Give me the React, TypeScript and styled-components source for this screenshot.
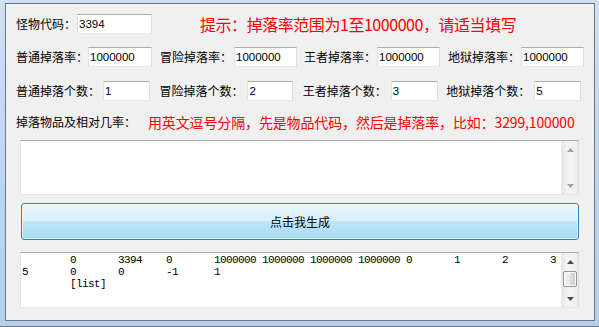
import React from "react";
import styled, { createGlobalStyle } from "styled-components";

const Global = createGlobalStyle`
  html, body { margin: 0; padding: 0; background: #ffffff; }
  body { font-family: "Noto Sans CJK SC", "Liberation Sans", sans-serif; }
  * { box-sizing: border-box; }
`;

const Frame = styled.div`
  width: 599px;
  height: 327px;
  padding: 3px 4px 5px 5px;
  background: linear-gradient(180deg, #cfe0f3 0%, #bcd4ee 60%, #b7d0ec 100%);
  border-bottom: 1px solid #6b7a8c;
`;

const Client = styled.div`
  width: 590px;
  height: 318px;
  background: #f0f0f0;
  border: 1px solid #6d7886;
  display: flex;
  flex-direction: column;
  font-size: 12px;
  color: #000;
`;

const Row = styled.div<{ $top: number }>`
  display: flex;
  align-items: center;
  height: 20px;
  margin-top: ${(p) => p.$top}px;
  padding-left: 10px;
`;

const FieldGrid = styled.div<{ $top: number; $col: number }>`
  display: grid;
  grid-template-columns: repeat(4, ${(p) => p.$col}px);
  align-items: center;
  height: 20px;
  margin-top: ${(p) => p.$top}px;
  padding-left: 10px;
`;

const Field = styled.div`
  display: flex;
  align-items: center;
`;

const Label = styled.span<{ $w: number }>`
  width: ${(p) => p.$w}px;
  flex: none;
  font-size: 12px;
  line-height: 14px;
  white-space: nowrap;
`;

const Input = styled.div<{ $w: number; $ml?: number }>`
  width: ${(p) => p.$w}px;
  height: 20px;
  margin-left: ${(p) => p.$ml ?? 0}px;
  flex: none;
  background: #fff;
  border: 1px solid;
  border-color: #abadb3 #dbdfe6 #e3e9ef #e2e3ea;
  font-family: "Liberation Sans", Arial, sans-serif;
  font-size: 11.5px;
  line-height: 18px;
  padding-left: 1px;
  white-space: nowrap;
`;

const Hint = styled.span`
  margin-left: 48px;
  color: #ff0000;
  font-size: 16px;
  letter-spacing: -0.45px;
  line-height: 20px;
  white-space: nowrap;
`;

const NoteRow = styled.div`
  display: flex;
  align-items: center;
  height: 14px;
  margin-top: 14px;
  padding-left: 10px;
`;

const Note = styled.span`
  margin-left: 12px;
  color: #ff0000;
  font-size: 14px;
  letter-spacing: -0.14px;
  line-height: 14px;
  white-space: nowrap;
`;

const BoxArea = styled.div<{ $top: number }>`
  margin-top: ${(p) => p.$top}px;
  padding: 0 15px 0 14px;
`;

const TextBox = styled.div<{ $h: number }>`
  height: ${(p) => p.$h}px;
  background: #fff;
  border: 1px solid;
  border-color: #abadb3 #dbdfe6 #e3e9ef #e2e3ea;
  display: flex;
`;

const TextContent = styled.pre`
  flex: 1;
  margin: 0;
  padding: 1px 0 0 1px;
  font-family: "Liberation Mono", "Courier New", monospace;
  font-size: 11px;
  letter-spacing: -0.6px;
  line-height: 12px;
  color: #000;
  overflow: hidden;
`;

const ScrollBar = styled.div`
  width: 17px;
  flex: none;
  display: flex;
  flex-direction: column;
  background: linear-gradient(90deg, #e6e6e6 0%, #f2f2f2 30%, #f2f2f2 70%, #e9e9e9 100%);
  border-left: 1px solid #ececec;
`;

const ArrowBtn = styled.div`
  height: 17px;
  flex: none;
  display: flex;
  align-items: center;
  justify-content: center;
`;

const Track = styled.div`
  flex: 1;
  display: flex;
  flex-direction: column;
  padding-top: 1px;
`;

const Thumb = styled.div`
  height: 16px;
  margin: 0 1px;
  border: 1px solid #979797;
  border-radius: 2px;
  background: linear-gradient(90deg, #f5f5f5 0%, #ebebeb 45%, #d9d9d9 55%, #cfcfcf 100%);
  box-shadow: inset 0 0 0 1px #fbfbfb;
`;

const Button = styled.div`
  height: 37px;
  margin-left: 1px;
  border: 1px solid #3c7fb1;
  border-radius: 3px;
  background: linear-gradient(
    180deg,
    #eaf6fd 0%,
    #d9f0fc 49%,
    #bee6fd 50%,
    #a7d9f5 100%
  );
  box-shadow: inset 0 0 0 1px rgba(255, 255, 255, 0.6);
  display: flex;
  align-items: center;
  justify-content: center;
  font-size: 12px;
  color: #000;
`;

const Arrow = ({ up, color }: { up: boolean; color: string }) => (
  <svg width="7" height="4" viewBox="0 0 7 4">
    <polygon points={up ? "3.5,0 7,4 0,4" : "0,0 7,0 3.5,4"} fill={color} />
  </svg>
);

const pad = (s: string, n: number) => s + " ".repeat(Math.max(0, n - s.length));
const cols = (parts: string[]) => parts.map((p, i) => (i === parts.length - 1 ? p : pad(p, 8))).join("");

const outputText = [
  cols(["", "0", "3394", "0", "1000000", "1000000", "1000000", "1000000", "0", "1", "2", "3"]),
  cols(["5", "0", "0", "-1", "1"]),
  cols(["", "[list]"]),
].join("\n");

export default function App() {
  return (
    <>
      <Global />
      <Frame>
        <Client>
          <Row $top={10}>
            <Label $w={60}>怪物代码：</Label>
            <Input $w={75} $ml={1}>3394</Input>
            <Hint>提示：掉落率范围为1至1000000，请适当填写</Hint>
          </Row>

          <FieldGrid $top={13} $col={144}>
            <Field>
              <Label $w={72}>普通掉落率：</Label>
              <Input $w={64}>1000000</Input>
            </Field>
            <Field>
              <Label $w={74}>冒险掉落率：</Label>
              <Input $w={63}>1000000</Input>
            </Field>
            <Field>
              <Label $w={73}>王者掉落率：</Label>
              <Input $w={63}>1000000</Input>
            </Field>
            <Field>
              <Label $w={73}>地狱掉落率：</Label>
              <Input $w={63}>1000000</Input>
            </Field>
          </FieldGrid>

          <FieldGrid $top={14} $col={143.4}>
            <Field>
              <Label $w={87}>普通掉落个数：</Label>
              <Input $w={47}>1</Input>
            </Field>
            <Field>
              <Label $w={88}>冒险掉落个数：</Label>
              <Input $w={46}>2</Input>
            </Field>
            <Field>
              <Label $w={88}>王者掉落个数：</Label>
              <Input $w={47}>3</Input>
            </Field>
            <Field>
              <Label $w={88}>地狱掉落个数：</Label>
              <Input $w={47}>5</Input>
            </Field>
          </FieldGrid>

          <NoteRow>
            <Label $w={120}>掉落物品及相对几率：</Label>
            <Note>用英文逗号分隔，先是物品代码，然后是掉落率，比如：3299,100000</Note>
          </NoteRow>

          <BoxArea $top={11}>
            <TextBox $h={55}>
              <TextContent></TextContent>
              <ScrollBar>
                <ArrowBtn>
                  <Arrow up color="#a3a3a3" />
                </ArrowBtn>
                <Track />
                <ArrowBtn>
                  <Arrow up={false} color="#a3a3a3" />
                </ArrowBtn>
              </ScrollBar>
            </TextBox>
          </BoxArea>

          <BoxArea $top={8}>
            <Button>点击我生成</Button>
          </BoxArea>

          <BoxArea $top={12}>
            <TextBox $h={56}>
              <TextContent>{outputText}</TextContent>
              <ScrollBar>
                <ArrowBtn>
                  <Arrow up color="#4d4d4d" />
                </ArrowBtn>
                <Track>
                  <Thumb />
                </Track>
                <ArrowBtn>
                  <Arrow up={false} color="#4d4d4d" />
                </ArrowBtn>
              </ScrollBar>
            </TextBox>
          </BoxArea>
        </Client>
      </Frame>
    </>
  );
}
